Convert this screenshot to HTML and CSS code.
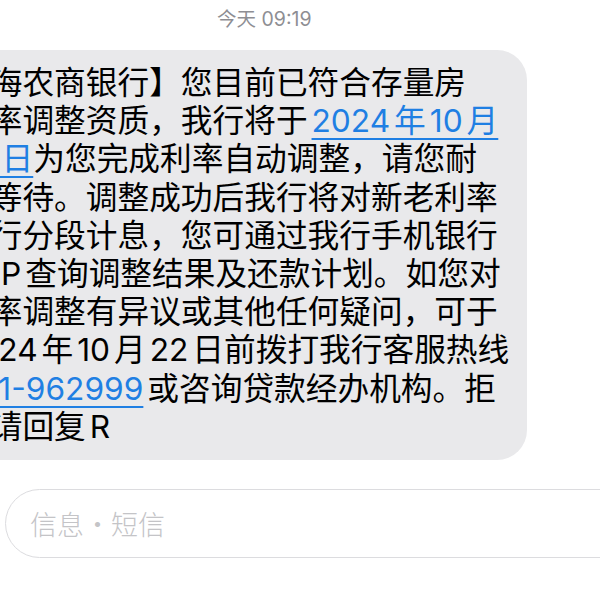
FILE: index.html
```html
<!DOCTYPE html>
<html lang="zh-CN">
<head>
<meta charset="utf-8">
<title>信息</title>
<link rel="stylesheet" href="styles.css">
</head>
<body>
<div class="thread">
  <div class="stamp">今天 09:19</div>
  <div class="bubble">
    <p class="msg">上海农商银行】您目前已符合存量房<br>利率调整资质，我行将于<a class="link">2024年10月<br>25日</a>为您完成利率自动调整，请您耐<br>心等待。调整成功后我行将对新老利率<br>进行分段计息，您可通过我行手机银行<br>APP查询调整结果及还款计划。如您对<br>利率调整有异议或其他任何疑问，可于<br>2024年10月22日前拨打我行客服热线<br><a class="link">021-962999</a>或咨询贷款经办机构。拒<br>收请回复R</p>
  </div>
</div>
<div class="composer">
  <div class="field"><span class="placeholder">信息・短信</span></div>
</div>
</body>
</html>
```

FILE: styles.css
```css
html, body {
  margin: 0;
  padding: 0;
  background: #ffffff;
}
body {
  width: 600px;
  height: 600px;
  overflow: hidden;
  font-family: Inter, "Noto Sans CJK SC", sans-serif;
}
.thread {
  display: flex;
  flex-direction: column;
}
.stamp {
  height: 38px;
  line-height: 38px;
  font-size: 19.5px;
  color: #8e8e93;
  padding-left: 217px;
  margin-bottom: 12px;
}
.bubble {
  box-sizing: border-box;
  width: 594px;
  margin-left: -67px;
  padding: 14px 26px;
  background: #e9e9eb;
  border-radius: 30px;
}
.msg {
  margin: 0;
  font-size: 31.7px;
  line-height: 38.2px;
  color: #000000;
  white-space: nowrap;
  text-autospace: normal;
}
.link {
  color: #1f7fe3;
  text-decoration: underline;
  text-decoration-thickness: 2px;
  text-underline-offset: 6px;
}
.composer {
  margin-top: 29px;
  padding-left: 5px;
}
.field {
  box-sizing: border-box;
  height: 69px;
  width: 640px;
  border: 1.5px solid #dcdcdf;
  border-radius: 35px;
  display: flex;
  align-items: center;
  padding-left: 24px;
}
.placeholder {
  font-size: 27px;
  color: #c4c4c7;
  font-weight: 300;
}
```
